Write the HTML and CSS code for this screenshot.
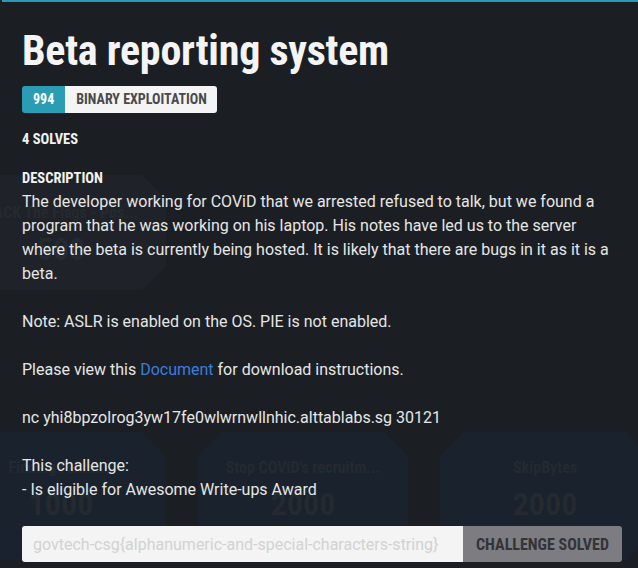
FILE: index.html
```html
<!DOCTYPE html>
<html lang="en">
<head>
<meta charset="utf-8">
<title>Beta reporting system</title>
<link rel="stylesheet" href="styles.css">
</head>
<body>
<div class="page">
  <div class="backdrop">
    <div class="card card-r1">
      <div class="card-title">HACK The Flags - Pos...</div>
      <div class="card-pts">500</div>
    </div>
    <div class="card card-r2c1">
      <div class="card-title">Finding Fahrin...</div>
      <div class="card-pts">1000</div>
    </div>
    <div class="card card-r2c2">
      <div class="card-title">Stop COViD's recruitm...</div>
      <div class="card-pts">2000</div>
    </div>
    <div class="card card-r2c3">
      <div class="card-title">SkipBytes</div>
      <div class="card-pts">2000</div>
    </div>
  </div>

  <div class="modal">
    <h1 class="title">Beta reporting system</h1>
    <div class="badge-row">
      <div class="badge">
        <span class="badge-pts">994</span>
        <span class="badge-cat">BINARY EXPLOITATION</span>
      </div>
    </div>
    <div class="solves">4 SOLVES</div>
    <div class="desc-head">DESCRIPTION</div>
    <div class="desc">
      <p>The developer working for COViD that we arrested refused to talk, but we found a program that he was working on his laptop. His notes have led us to the server where the beta is currently being hosted. It is likely that there are bugs in it as it is a beta.</p>
      <p>Note: ASLR is enabled on the OS. PIE is not enabled.</p>
      <p>Please view this <a class="link" href="#">Document</a> for download instructions.</p>
      <p>nc yhi8bpzolrog3yw17fe0wlwrnwllnhic.alttablabs.sg 30121</p>
      <p>This challenge:<br>- Is eligible for Awesome Write-ups Award</p>
    </div>
    <form class="flag-form">
      <input class="flag-input" type="text" placeholder="govtech-csg{alphanumeric-and-special-characters-string}">
      <button class="flag-btn" type="button">CHALLENGE SOLVED</button>
    </form>
  </div>
</div>
</body>
</html>
```
FILE: styles.css
```css
html, body {
  margin: 0;
  padding: 0;
}
body {
  background: #1b1f24;
  width: 638px;
  height: 568px;
  overflow: hidden;
  font-family: Roboto, "Liberation Sans", sans-serif;
}
.page {
  position: relative;
  width: 638px;
  height: 568px;
  overflow: hidden;
}

/* underlying challenge grid */
.backdrop {
  display: grid;
  grid-template-columns: repeat(4, 210px);
  grid-template-rows: 115px 128px;
  column-gap: 32px;
  row-gap: 142px;
  padding-top: 175px;
  margin-left: -44px;
}
.card {
  background: #19222d;
  clip-path: polygon(24px 0, calc(100% - 24px) 0, 100% 24px, 100% calc(100% - 24px), calc(100% - 24px) 100%, 24px 100%, 0 calc(100% - 24px), 0 24px);
  text-align: center;
  padding-top: 26px;
  box-sizing: border-box;
  font-family: Roboto, sans-serif;
  font-stretch: 80%;
  font-weight: 700;
  color: #242a30;
}
.card-r1 { grid-row: 1; grid-column: 1; background: #1f2329; padding-top: 28px; }
.card-r2c1 { grid-row: 2; grid-column: 1; }
.card-r2c2 { grid-row: 2; grid-column: 2; }
.card-r2c3 { grid-row: 2; grid-column: 3; }
.card-title {
  font-size: 16px;
  line-height: 20px;
  white-space: nowrap;
}
.card-pts {
  font-size: 32px;
  line-height: 36px;
  margin-top: 8px;
}

/* modal */
.modal {
  position: absolute;
  top: 0;
  left: 2px;
  width: 640px;
  box-sizing: border-box;
  border-top: 2px solid #2a9ab2;
  padding: 25px 20px 0 20px;
  color: #e6e6e6;
}
.title {
  margin: 0;
  font-family: Roboto, sans-serif;
  font-stretch: 75%;
  font-weight: 700;
  font-size: 42px;
  line-height: 48px;
  letter-spacing: -0.25px;
  color: #f4f4f4;
}
.badge-row {
  display: flex;
  margin-top: 11px;
}
.badge {
  display: flex;
  height: 27px;
  border-radius: 3px;
  overflow: hidden;
  font-family: Roboto, sans-serif;
  font-stretch: 80%;
  font-weight: 700;
  font-size: 14px;
  line-height: 27px;
}
.badge-pts {
  background: #2a9cb4;
  color: #ffffff;
  padding: 0 11px;
}
.badge-cat {
  background: #f4f4f4;
  color: #4a4a4a;
  padding: 0 10px 0 11px;
}
.solves,
.desc-head {
  font-family: Roboto, sans-serif;
  font-stretch: 84%;
  font-weight: 700;
  font-size: 14.5px;
  line-height: 20px;
  color: #f2f2f2;
}
.solves { margin-top: 17px; }
.desc-head { margin-top: 19px; }
.desc {
  margin-top: 1px;
  font-size: 16px;
  line-height: 24px;
}
.desc p {
  margin: 0 0 24px 0;
}
.desc p:last-child {
  margin-bottom: 0;
}
.link {
  color: #3b7ddd;
  text-decoration: none;
}
.flag-form {
  display: flex;
  height: 36px;
  margin: 24px 0 0 0;
}
.flag-input {
  flex: 1;
  min-width: 0;
  border: none;
  outline: none;
  background: #f4f4f4;
  border-radius: 3px 0 0 3px;
  padding: 0 11px;
  font-family: Roboto, "Liberation Sans", sans-serif;
  font-size: 16px;
  color: #333;
}
.flag-input::placeholder {
  color: #d2d2d2;
}
.flag-btn {
  width: 159px;
  border: none;
  background: #7d7c81;
  color: #323438;
  border-radius: 0 3px 3px 0;
  font-family: Roboto, sans-serif;
  font-stretch: 80%;
  font-weight: 700;
  font-size: 16px;
  padding: 0;
}
```
